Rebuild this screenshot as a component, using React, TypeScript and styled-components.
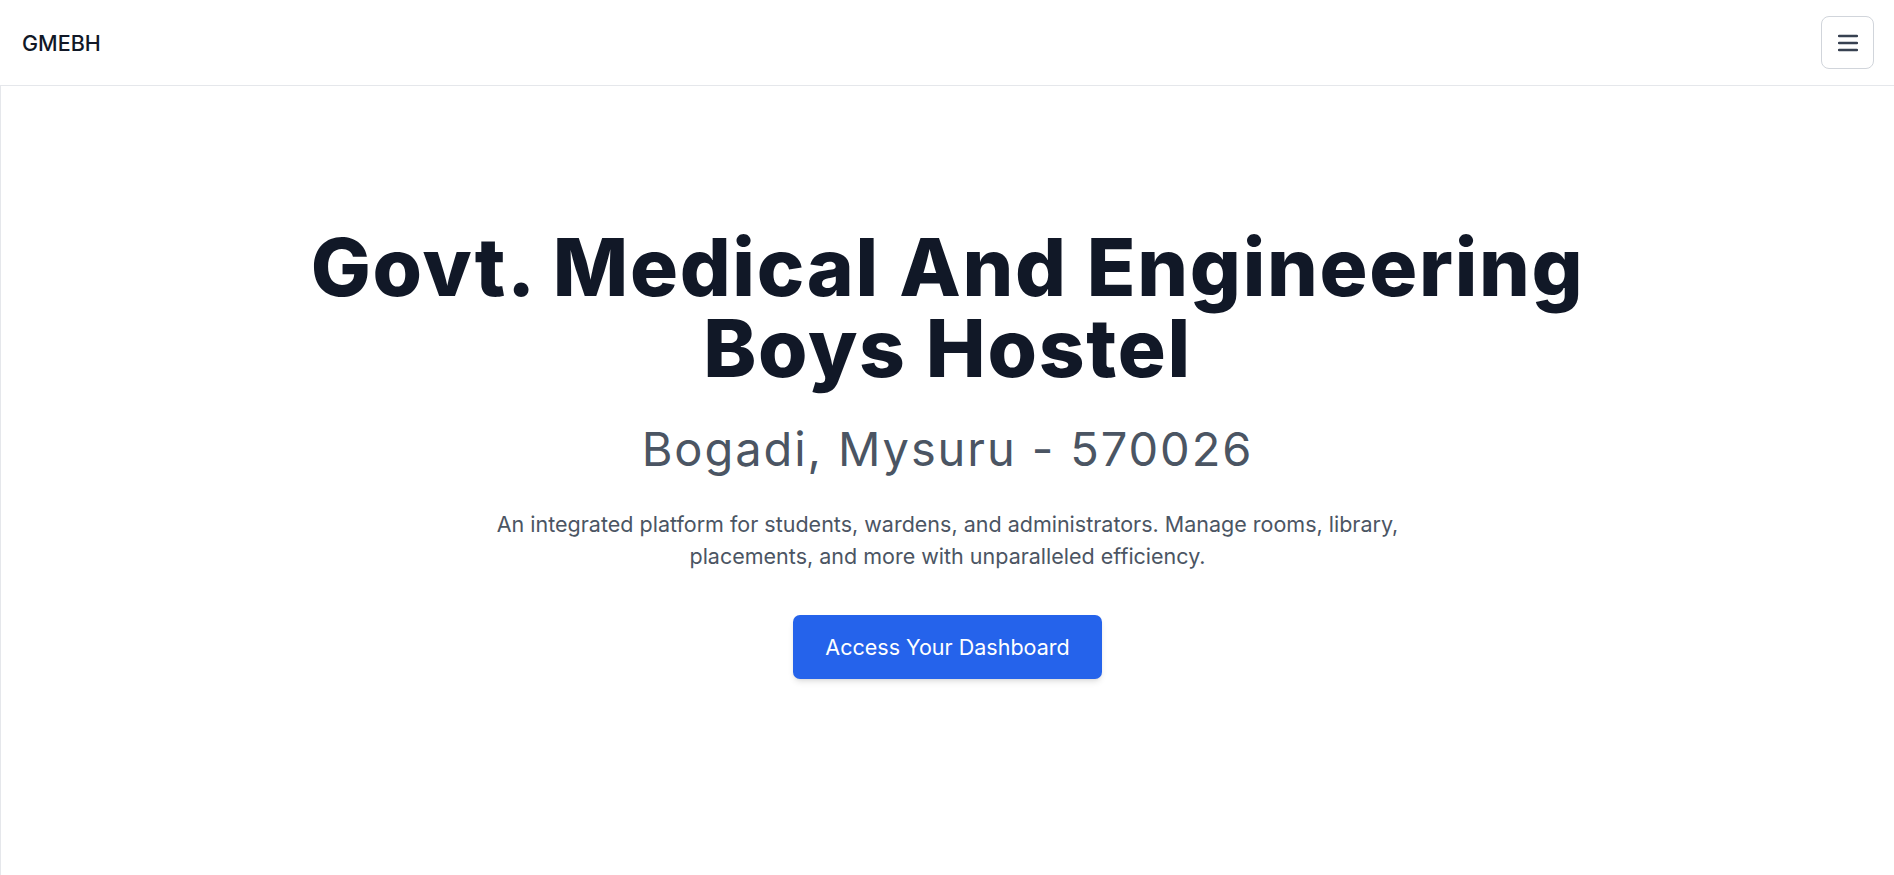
import React from "react";
import styled, { createGlobalStyle } from "styled-components";

const GlobalStyle = createGlobalStyle`
  html, body {
    margin: 0;
    padding: 0;
    background: #ffffff;
    font-family: Inter, "Noto Sans", sans-serif;
    -webkit-font-smoothing: antialiased;
  }
  * { box-sizing: border-box; }
`;

const Page = styled.div`
  display: flex;
  flex-direction: column;
  min-height: 100vh;
  background: #ffffff;
`;

const TopBar = styled.header`
  height: 86px;
  display: flex;
  align-items: center;
  justify-content: space-between;
  padding: 0 20px 0 22px;
  border-bottom: 1px solid #e5e7eb;
  background: #ffffff;
`;

const Brand = styled.div`
  font-family: Inter, sans-serif;
  font-size: 21.5px;
  font-weight: 500;
  color: #111827;
`;

const MenuButton = styled.button`
  width: 53px;
  height: 53px;
  display: flex;
  align-items: center;
  justify-content: center;
  padding: 0;
  border: 1px solid #d1d5db;
  border-radius: 8px;
  background: #ffffff;
  color: #374151;
  cursor: pointer;
`;

const Main = styled.main`
  flex: 1;
  display: flex;
  flex-direction: column;
  align-items: center;
  padding-top: 140px;
  border-left: 1px solid #e5e7eb;
  text-align: center;
`;

const Title = styled.h1`
  margin: 0;
  font-family: Inter, sans-serif;
  font-size: 80px;
  line-height: 81px;
  font-weight: 800;
  color: #111827;
  letter-spacing: 1.7px;
`;

const TitleLine = styled.span`
  display: block;
`;

const Subtitle = styled.h2`
  margin: 33px 0 0;
  font-family: Inter, sans-serif;
  font-size: 47px;
  line-height: 56px;
  font-weight: 400;
  color: #4b5563;
  letter-spacing: 1.9px;
`;

const Lead = styled.p`
  margin: 31px 0 0;
  max-width: 960px;
  font-family: Inter, sans-serif;
  font-size: 21.5px;
  line-height: 32px;
  font-weight: 400;
  color: #4b5563;
`;

const CtaButton = styled.button`
  margin-top: 43px;
  height: 64px;
  padding: 0 32px;
  border: none;
  border-radius: 7px;
  background: #2563eb;
  color: #ffffff;
  font-family: Inter, sans-serif;
  font-size: 21.5px;
  font-weight: 400;
  cursor: pointer;
  box-shadow: 0 4px 6px -1px rgba(0, 0, 0, 0.1), 0 2px 4px -2px rgba(0, 0, 0, 0.1);
`;

const MenuIcon = () => (
  <svg width="20" height="18" viewBox="0 0 20 18" fill="none">
    <line x1="1" y1="2" x2="19" y2="2" stroke="currentColor" strokeWidth="2.4" strokeLinecap="round" />
    <line x1="1" y1="9" x2="19" y2="9" stroke="currentColor" strokeWidth="2.4" strokeLinecap="round" />
    <line x1="1" y1="16" x2="19" y2="16" stroke="currentColor" strokeWidth="2.4" strokeLinecap="round" />
  </svg>
);

export default function App() {
  return (
    <>
      <GlobalStyle />
      <Page>
        <TopBar>
          <Brand>GMEBH</Brand>
          <MenuButton aria-label="Open menu">
            <MenuIcon />
          </MenuButton>
        </TopBar>
        <Main>
          <Title>
            <TitleLine>Govt. Medical And Engineering</TitleLine>
            <TitleLine>Boys Hostel</TitleLine>
          </Title>
          <Subtitle>Bogadi, Mysuru - 570026</Subtitle>
          <Lead>
            An integrated platform for students, wardens, and administrators. Manage rooms, library,
            placements, and more with unparalleled efficiency.
          </Lead>
          <CtaButton>Access Your Dashboard</CtaButton>
        </Main>
      </Page>
    </>
  );
}
